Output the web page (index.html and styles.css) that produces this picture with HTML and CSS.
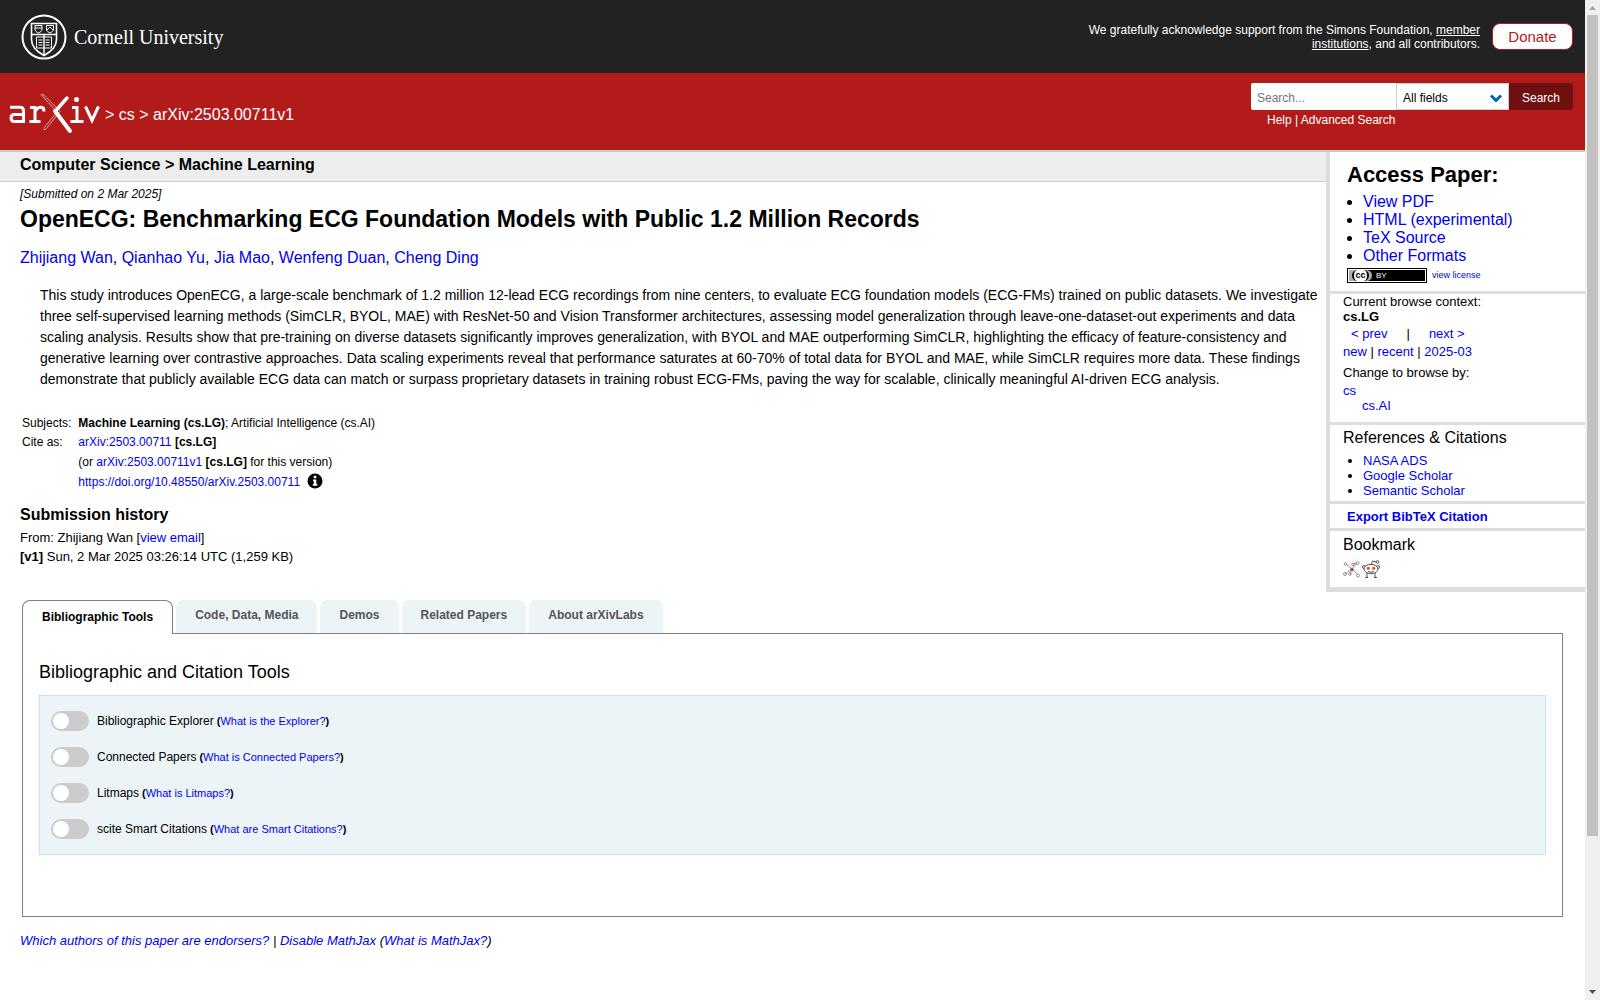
FILE: index.html
```html
<!DOCTYPE html>
<html lang="en">
<head>
<meta charset="utf-8">
<title>OpenECG: Benchmarking ECG Foundation Models with Public 1.2 Million Records</title>
<link rel="stylesheet" href="styles.css">
</head>
<body>
<div class="page">
  <header>
    <div class="cornell-bar">
      <a class="cornell" href="#">
        <svg class="seal" viewBox="0 0 46 46" fill="none" stroke="#fff">
          <circle cx="23" cy="23" r="21.5" stroke-width="2"/>
          <path d="M10.5 9.500h25v16c0 7-5 12-12.500 16-7.500-4-12.500-9-12.500-16z" stroke-width="1.600"/>
          <path d="M10.500 20.500h25M23 21v21" stroke-width="1.400"/>
          <path d="M14 11.500h7v3.500c0 2-1.500 3-3.500 4-2-1-3.500-2-3.500-4zM14 14h7M25.500 11.500h7v3.500c0 2-1.500 3-3.500 4-2-1-3.500-2-3.500-4zM26 16l3-3 3 3"/>
          <path d="M15.500 23h15v11h-15zM17.500 26h4M17.500 28.500h4M17.500 31h4M24.500 26h4M24.500 28.500h4M24.500 31h4"/>
        </svg>
        <span class="cornell-name">Cornell University</span>
      </a>
      <div class="support">
        <p>We gratefully acknowledge support from the Simons Foundation, <a href="#">member institutions</a>, and all contributors.</p>
        <a class="donate" href="#">Donate</a>
      </div>
    </div>
    <div class="brand-bar">
      <div class="crumbs">
        <a href="#" class="arxiv-logo" aria-label="arXiv">
          <svg viewBox="0 0 92 42" fill="none" stroke="#fff">
            <path d="M1 14.300H11Q14.500 14.300 14.500 18V28.500H5.500Q2 28.500 2 25Q2 21.500 5.500 21.500H14.500M14 28.500h2M21 14.500h5V28.500M20.500 28.500h11M26 18.500Q28.500 14.300 32 14.300Q35 14.300 35 18.500" stroke-width="3"/>
            <path d="M32 1.500Q34 .5 36 3L51 18.500L37 36Q35 38 34.500 35.500L48 19z" stroke-width=".7" opacity=".85"/>
            <path d="M58 5L46.500 18" stroke-width="3.400" stroke-linecap="round"/>
            <path d="M46 18L61 38" stroke-width="4" stroke-linecap="round"/>
            <path d="M63 14.500h5V28.500M61.500 28.500h13M76.500 13.500l6.500 14 6.500-14" stroke-width="3"/>
            <circle cx="67.500" cy="6.500" r="2.500" fill="#fff" stroke="none"/>
          </svg>
        </a>
        <span>&gt; <a href="#">cs</a> &gt; arXiv:2503.00711v1</span>
      </div>
      <form class="search">
        <div class="search-row">
          <input class="query" type="text" placeholder="Search..." aria-label="Search term">
          <span class="field">
            <select aria-label="Field to search"><option>All fields</option></select>
            <svg viewBox="0 0 12 8" fill="none" stroke="#0068ac" stroke-width="3"><path d="M1 1.500l5 5 5-5"/></svg>
          </span>
          <button class="go" type="button">Search</button>
        </div>
        <p class="help"><a href="#">Help</a> | <a href="#">Advanced Search</a></p>
      </form>
    </div>
  </header>

  <main>
    <div class="columns">
      <article>
        <p class="subject">Computer Science &gt; Machine Learning</p>
        <div class="abs">
          <p class="dateline">[Submitted on 2 Mar 2025]</p>
          <h1>OpenECG: Benchmarking ECG Foundation Models with Public 1.2 Million Records</h1>
          <p class="authors"><a href="#">Zhijiang Wan</a>, <a href="#">Qianhao Yu</a>, <a href="#">Jia Mao</a>, <a href="#">Wenfeng Duan</a>, <a href="#">Cheng Ding</a></p>
          <blockquote>This study introduces OpenECG, a large-scale benchmark of 1.2 million 12-lead ECG recordings from nine centers, to evaluate ECG foundation models (ECG-FMs) trained on public datasets. We investigate three self-supervised learning methods (SimCLR, BYOL, MAE) with ResNet-50 and Vision Transformer architectures, assessing model generalization through leave-one-dataset-out experiments and data scaling analysis. Results show that pre-training on diverse datasets significantly improves generalization, with BYOL and MAE outperforming SimCLR, highlighting the efficacy of feature-consistency and generative learning over contrastive approaches. Data scaling experiments reveal that performance saturates at 60-70% of total data for BYOL and MAE, while SimCLR requires more data. These findings demonstrate that publicly available ECG data can match or surpass proprietary datasets in training robust ECG-FMs, paving the way for scalable, clinically meaningful AI-driven ECG analysis.</blockquote>
          <table class="meta">
            <tr><th scope="row">Subjects:</th><td><b>Machine Learning (cs.LG)</b>; Artificial Intelligence (cs.AI)</td></tr>
            <tr><th scope="row">Cite as:</th><td><a href="#">arXiv:2503.00711</a> <b>[cs.LG]</b></td></tr>
            <tr><th></th><td>(or <a href="#">arXiv:2503.00711v1</a> <b>[cs.LG]</b> for this version)</td></tr>
            <tr><th></th><td><span class="doi"><a href="#">https://doi.org/10.48550/arXiv.2503.00711</a>
              <svg viewBox="0 0 16 16"><circle cx="8" cy="8" r="7.500"/><path d="M6.700 2.800h2.600v2.400H6.700zM6 6.500h3.300v4.500h1v1.800H5.800V11h1V8.300H6z" fill="#fff"/></svg></span></td></tr>
          </table>
          <h2>Submission history</h2>
          <p class="history">From: Zhijiang Wan [<a href="#">view email</a>]<br><b>[v1]</b> Sun, 2 Mar 2025 03:26:14 UTC (1,259 KB)</p>
        </div>
      </article>

      <aside>
        <section class="access">
          <h2>Access Paper:</h2>
          <ul>
            <li><a href="#">View PDF</a></li>
            <li><a href="#">HTML (experimental)</a></li>
            <li><a href="#">TeX Source</a></li>
            <li><a href="#">Other Formats</a></li>
          </ul>
          <div class="license">
            <span class="cc"><span class="cc-mark"><span class="cc-ring">cc</span></span><span class="cc-by">BY</span></span>
            <a href="#">view license</a>
          </div>
        </section>
        <section class="browse">
          <p>Current browse context:<br><b>cs.LG</b></p>
          <p class="prevnext"><a href="#">&lt; prev</a><span>|</span><a href="#">next &gt;</a></p>
          <p class="list-links"><a href="#">new</a> | <a href="#">recent</a> | <a href="#">2025-03</a></p>
          <p class="change">Change to browse by:</p>
          <p><a href="#">cs</a></p>
          <p class="sub"><a href="#">cs.AI</a></p>
        </section>
        <section class="refs">
          <h3>References &amp; Citations</h3>
          <ul>
            <li><a href="#">NASA ADS</a></li>
            <li><a href="#">Google Scholar</a></li>
            <li><a href="#">Semantic Scholar</a></li>
          </ul>
        </section>
        <section class="export"><button type="button">Export BibTeX Citation</button></section>
        <section class="bookmark">
          <h3>Bookmark</h3>
          <div class="marks">
            <a href="#" aria-label="BibSonomy"><svg viewBox="0 0 18 18" fill="none" stroke="#888" stroke-width=".9"><path d="M3 4l6 5 5-6M9 9l6 6M9 9l-7 5M9 9l-2 5M14 3l-4 1"/><circle cx="2.500" cy="4" r="1.300"/><circle cx="14.500" cy="3" r="1.500"/><circle cx="10" cy="4.500" r="1.300"/><circle cx="2" cy="14" r="1.500"/><circle cx="7" cy="14" r="1.300"/><circle cx="15" cy="15.500" r="1.500"/><circle cx="9" cy="9.500" r="1.300" fill="#a35" stroke="#a35"/></svg></a>
            <a href="#" aria-label="Reddit"><svg viewBox="0 0 18 18" fill="none" stroke="#555"><path d="M9 5l1.500-4 4 1M5 12v5.500M13 12v5.500M3 17.500h3M12 17.500h3"/><circle cx="2" cy="7" r="1.500"/><circle cx="16" cy="7" r="1.500"/><ellipse cx="9" cy="9" rx="7" ry="4.700" fill="#fff"/><circle cx="15.500" cy="2" r="1.400"/><path d="M6 11.500q3 1.600 6 0"/><circle cx="6.300" cy="8.300" r="1.500" fill="#ff4500" stroke="none"/><circle cx="11.700" cy="8.300" r="1.500" fill="#ff4500" stroke="none"/></svg></a>
          </div>
        </section>
      </aside>
    </div>

    <div class="labs">
      <div class="tabs" role="tablist">
        <button class="tab active" role="tab" aria-selected="true" type="button">Bibliographic Tools</button>
        <button class="tab" role="tab" type="button">Code, Data, Media</button>
        <button class="tab" role="tab" type="button">Demos</button>
        <button class="tab" role="tab" type="button">Related Papers</button>
        <button class="tab" role="tab" type="button">About arXivLabs</button>
      </div>
      <div class="panel" role="tabpanel">
        <h2>Bibliographic and Citation Tools</h2>
        <div class="toggles">
          <div class="toggle"><input type="checkbox" id="explorer"><label for="explorer">Bibliographic Explorer</label><span class="about"><b>(</b><a href="#">What is the Explorer?</a><b>)</b></span></div>
          <div class="toggle"><input type="checkbox" id="connected"><label for="connected">Connected Papers</label><span class="about"><b>(</b><a href="#">What is Connected Papers?</a><b>)</b></span></div>
          <div class="toggle"><input type="checkbox" id="litmaps"><label for="litmaps">Litmaps</label><span class="about"><b>(</b><a href="#">What is Litmaps?</a><b>)</b></span></div>
          <div class="toggle"><input type="checkbox" id="scite"><label for="scite">scite Smart Citations</label><span class="about"><b>(</b><a href="#">What are Smart Citations?</a><b>)</b></span></div>
        </div>
      </div>
    </div>
    <p class="endorsers"><a href="#">Which authors of this paper are endorsers?</a> | <a href="#">Disable MathJax</a> (<a href="#">What is MathJax?</a>)</p>
  </main>
</div>
<div class="scrollbar" aria-hidden="true">
  <svg viewBox="0 0 15 15"><path d="M4 10l3.500-4 3.500 4z" fill="#a3a3a3"/></svg>
  <div class="track"><div class="thumb"></div></div>
  <svg viewBox="0 0 15 15"><path d="M4 5h7l-3.500 4z" fill="#505050"/></svg>
</div>
</body>
</html>
```
FILE: styles.css
```css
* { box-sizing: border-box; }
body {
  margin: 0;
  display: flex;
  align-items: flex-start;
  background: #fff;
  color: #000;
  font-family: "Liberation Sans", Arial, sans-serif;
  font-size: 13px;
  line-height: 15px;
}
h1, h2, h3, p, ul, blockquote { margin: 0; }
a { color: #0000ee; text-decoration: none; }
button, input, select { font-family: inherit; margin: 0; }
.page { flex: 1; min-width: 0; }

/* Header */
.cornell-bar {
  display: flex;
  justify-content: space-between;
  align-items: center;
  height: 73px;
  padding: 0 12px 0 21px;
  background: #222;
}
.cornell { display: flex; align-items: center; gap: 7px; color: #fff; }
.seal { width: 46px; height: 46px; }
.cornell-name {
  font-family: "Liberation Serif", serif;
  font-size: 20px;
  line-height: 24px;
}
.support { display: flex; align-items: center; gap: 12px; }
.support p { width: 400px; color: #fff; font-size: 12px; line-height: 14px; text-align: right; }
.support p a { color: #fff; text-decoration: underline; }
.donate {
  width: 81px;
  border: 1px solid #b31b1b;
  border-radius: 8px;
  background: #fff;
  color: #b31b1b;
  font-size: 15px;
  line-height: 25px;
  text-align: center;
}
.brand-bar {
  display: flex;
  justify-content: space-between;
  height: 79px;
  padding: 10px 12px 0 9px;
  border-bottom: 2px solid #ccc;
  background: #b31b1b;
  color: #fff;
}
.brand-bar a { color: #fff; }
.crumbs { display: flex; align-items: center; gap: 4px; height: 62px; font-size: 16px; line-height: 20px; }
.crumbs span { padding-top: 2px; }
.arxiv-logo svg { display: block; width: 92px; height: 42px; }
.search-row { display: flex; height: 27px; }
.query {
  width: 145px;
  padding: 2px 6px 0;
  border: 0;
  border-radius: 2px 0 0 2px;
  background: #fff;
  font-size: 12px;
}
.query::placeholder { color: #757575; }
.field { position: relative; display: flex; }
.field select {
  width: 113px;
  padding: 2px 6px 0;
  border: 1px solid #ccc;
  border-radius: 0;
  appearance: none;
  background: #fff;
  color: #000;
  font-size: 12px;
}
.field svg { position: absolute; right: 7px; top: 11px; width: 12px; height: 8px; }
.go {
  width: 64px;
  padding: 3px 0 0;
  border: 0;
  border-radius: 0 3px 3px 0;
  background: #701111;
  color: #fff;
  font-size: 12px;
}
.help { padding: 3px 16px; font-size: 12px; }

/* Paper */
.columns { display: flex; }
article { flex: 1; min-width: 0; }
.subject {
  padding: 0 20px 4px;
  border-bottom: 1px solid #ccc;
  background: #ededed;
  font-size: 16px;
  line-height: 25px;
  font-weight: bold;
}
.abs { padding: 4px 0 0 20px; }
.dateline { font-size: 12px; line-height: 16px; font-style: italic; }
h1 { padding-top: 3px; font-size: 23px; line-height: 28px; }
.authors { padding-top: 15px; font-size: 16px; line-height: 20px; }
blockquote { padding: 17px 0 0 20px; font-size: 14px; line-height: 21px; }
.meta { margin-top: 24px; border-collapse: collapse; font-size: 12px; line-height: 19px; }
.meta th { padding: 0 7px 0 2px; font-weight: normal; text-align: left; }
.meta td { padding: 0; }
.meta tr:nth-child(n+3) td { padding-top: 1px; }
.doi { display: flex; gap: 7px; }
.doi svg { width: 16px; height: 16px; }
article h2 { padding-top: 13px; font-size: 16px; line-height: 19px; }
.history { padding-top: 4px; line-height: 19px; }

/* Sidebar */
aside { width: 259px; border-left: 4px solid #ddd; border-bottom: 5px solid #ddd; }
aside section + section { border-top: 3px solid #ddd; }
aside section { padding-left: 13px; }
aside h3 { font-size: 16px; line-height: 18px; font-weight: normal; }
aside ul { padding-left: 20px; }
aside .access { padding: 9px 0 8px 17px; }
.access h2 { font-size: 22px; line-height: 27px; }
.access ul { padding: 5px 0 0 16px; font-size: 16px; line-height: 18px; }
.license { display: flex; align-items: center; gap: 5px; padding-top: 3px; font-size: 9px; }
.cc {
  display: flex;
  align-items: center;
  width: 80px;
  height: 15px;
  padding-left: 1px;
  border: 1px solid #000;
  outline: 1px solid #fff;
  outline-offset: -2px;
  background: #000;
  color: #fff;
  font-size: 8px;
}
.cc-mark {
  width: 23px;
  height: 11px;
  padding-left: 3px;
  border-radius: 0 6px 6px 0;
  background: #abb1aa;
}
.cc-ring {
  display: block;
  width: 17px;
  height: 11px;
  border: 2px solid #000;
  border-width: 0 2px;
  border-radius: 6px;
  background: #fff;
  color: #000;
  font-size: 9px;
  line-height: 10px;
  font-weight: bold;
  text-align: center;
}
.cc-by { padding-left: 4px; }
.browse { padding-bottom: 9px; }
.prevnext { display: flex; gap: 19px; padding: 2px 8px 0; }
.list-links { padding-top: 3px; }
.change { padding: 6px 0 3px; }
.sub { padding-left: 19px; }
.refs h3 { padding: 4px 0 6px; }
.refs ul { padding-bottom: 3px; }
.export button {
  display: block;
  padding: 5px 0 4px 4px;
  border: 0;
  background: none;
  color: #0000ee;
  font-size: 13px;
  line-height: 15px;
  font-weight: bold;
}
.bookmark h3 { padding: 5px 0 4px; }
.marks { display: flex; gap: 1px; padding: 2px 0 9px; }
.marks svg { display: block; width: 18px; height: 18px; }

/* Tabs and panel */
.labs { padding: 8px 22px 0; }
.tabs { display: flex; align-items: flex-start; gap: 3px; }
.tab {
  height: 33px;
  padding: 0 19px 2px;
  border: 0;
  border-radius: 8px 8px 0 0;
  background: #edf4f7;
  color: #555;
  font-size: 12px;
  line-height: 15px;
  font-weight: bold;
}
.tab.active {
  position: relative;
  height: 34px;
  margin-bottom: -1px;
  border: 1px solid #808080;
  border-bottom: 0;
  background: #fff;
  padding-bottom: 0;
  color: #000;
}
.panel { padding: 26px 16px 61px; border: 1px solid #808080; }
.panel h2 { font-size: 18px; line-height: 24px; font-weight: normal; }
.toggles {
  display: flex;
  flex-direction: column;
  gap: 16px;
  margin-top: 11px;
  padding: 15px 11px;
  border: 1px dotted #b5d1db;
  background: #edf4f7;
}
.toggle { display: flex; align-items: center; gap: 3px; font-size: 12px; line-height: 20px; }
.toggle input {
  width: 38px;
  height: 20px;
  margin-right: 5px;
  appearance: none;
  border-radius: 10px;
  background: #ccc;
}
.toggle input::before {
  content: "";
  display: block;
  width: 16px;
  height: 16px;
  margin: 2px;
  border-radius: 8px;
  background: #fff;
}
.about { font-size: 11px; }
.endorsers { padding: 16px 20px 48px; font-style: italic; }

/* Scroll bar */
.scrollbar {
  position: sticky;
  top: 0;
  display: flex;
  flex-direction: column;
  width: 15px;
  height: 100vh;
  background: #f0f0f0;
}
.scrollbar svg { width: 15px; height: 15px; }
.track { flex: 1; padding: 0 2px; }
.thumb { height: 84.6%; background: #c1c1c1; }
```
